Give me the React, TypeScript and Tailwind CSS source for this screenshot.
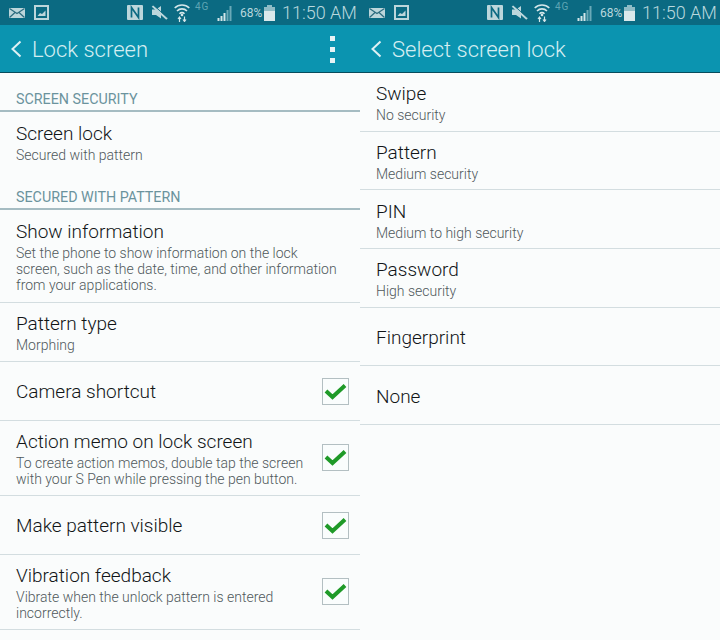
import React from "react";

const F = "font-['Roboto',sans-serif]";

function StatusBar() {
  return (
    <div className="h-[25px] bg-[#0b6a82] flex items-center text-[#b9d8de] shrink-0">
      <svg width="16" height="10" viewBox="0 0 16 10" className="ml-[9px]">
        <rect width="16" height="10" fill="#bcd6db" />
        <path d="M0.5 0.5L8 5.5L15.5 0.5M0.5 9.5L6 4.5M15.5 9.5L10 4.5" stroke="#2c6c7f" strokeWidth="1.2" fill="none" />
      </svg>
      <svg width="15" height="15" viewBox="0 0 15 15" className="ml-[9px]">
        <rect x="1" y="1" width="13" height="13" fill="#0b6a82" stroke="#bcd6db" strokeWidth="2" />
        <path d="M3.5 11L6 8L8 9L11.5 5.5V11Z" fill="#bcd6db" />
      </svg>
      <svg width="16" height="15" viewBox="0 0 16 15" className="ml-[78px]">
        <rect width="16" height="15" rx="1" fill="#bcd6db" />
        <path d="M4.5 12.5V2.5L11.5 12.5V2.5" stroke="#0b6a82" strokeWidth="1.7" fill="none" />
      </svg>
      <svg width="17" height="15" viewBox="0 0 17 15" className="ml-[8px]">
        <path d="M1 4.5H5L10 1V13.5L5 10H1Z" fill="#bcd6db" />
        <path d="M1.5 1L16 14" stroke="#bcd6db" strokeWidth="2.2" />
        <path d="M1.5 -0.8L16 12.2" stroke="#0b6a82" strokeWidth="0.9" />
      </svg>
      <svg width="16" height="19" viewBox="0 0 16 19" className="ml-[6px]">
        <path d="M0.7 5A10.5 10.5 0 0 1 15.3 5M3 8A7 7 0 0 1 13 8M5.5 10.7A3.5 3.5 0 0 1 10.5 10.7" stroke="#d4e6e9" strokeWidth="1.6" fill="none" />
        <circle cx="8" cy="12" r="1.3" fill="#d4e6e9" />
        <path d="M5.5 19V14.5M4 16L5.5 14L7 16M10.5 13.5V18M9 16.5L10.5 18.5L12 16.5" stroke="#d4e6e9" strokeWidth="1.2" fill="none" />
      </svg>
      <span className={`${F} text-[10px] leading-none ml-[5px] w-[22px] -mt-[11px] text-[#5fa5b4] tracking-[1px]`}>4G</span>
      <svg width="16" height="16" viewBox="0 0 16 16">
        <path d="M0.5 13H2.5V16H0.5ZM3.5 11H5.5V16H3.5ZM6.5 8H8.5V16H6.5Z" fill="#d4e6e9" />
        <path d="M9.5 5H11.5V16H9.5ZM12.5 1H14.5V16H12.5Z" fill="#6aa9b7" />
      </svg>
      <span className={`${F} text-[12px] leading-none ml-[7px] w-[24px] whitespace-nowrap`}>68%</span>
      <svg width="11" height="16" viewBox="0 0 11 16">
        <path d="M3 0H8V2H3Z" fill="#8fbcc6" />
        <rect y="2" width="11" height="5" fill="#8fbcc6" />
        <rect y="6" width="11" height="10" fill="#d9e8eb" />
      </svg>
      <span className={`${F} font-light text-[18px] leading-none ml-[7px] whitespace-nowrap`}>11:50 AM</span>
    </div>
  );
}

function Header({ title, menu }: { title: string; menu?: boolean }) {
  return (
    <div className="h-[48px] bg-[#0b94b0] border-b border-[#074c5c] flex items-center shrink-0">
      <svg width="12" height="18" viewBox="0 0 12 18" className="ml-[10px] mt-[1px]">
        <path d="M10.5 1.5L2.5 9L10.5 16.5" stroke="#dff1f4" strokeWidth="2" fill="none" />
      </svg>
      <span className={`${F} font-light text-[22px] leading-none text-[#d5eef2] ml-[10px] flex-1 pt-[3px]`}>{title}</span>
      {menu && (
        <div className="flex flex-col gap-[6px] mr-[25px] mt-[2px]">
          <div className="w-[5px] h-[5px] bg-[#e6f3f5]" />
          <div className="w-[5px] h-[5px] bg-[#e6f3f5]" />
          <div className="w-[5px] h-[5px] bg-[#e6f3f5]" />
        </div>
      )}
    </div>
  );
}

function Section({ label }: { label: string }) {
  return (
    <div className={`${F} h-[39px] border-b-2 border-[#a5bcc2] flex items-end px-4 pb-[2px] text-[14.3px] leading-[18px] text-[#6b939d] shrink-0`}>
      {label}
    </div>
  );
}

function Check() {
  return (
    <div className="w-[27px] h-[27px] border border-[#b3bfc2] bg-[#fafdfd] flex items-center justify-center shrink-0 ml-2 -translate-y-px">
      <svg width="23" height="17" viewBox="0 0 23 17">
        <path d="M2 8L8.5 14L21 2.5" stroke="#1f9a28" strokeWidth="4" fill="none" />
      </svg>
    </div>
  );
}

function Row({
  title,
  sub,
  h,
  check,
  line = true,
}: {
  title: string;
  sub?: string[];
  h: string;
  check?: boolean;
  line?: boolean;
}) {
  return (
    <div className={`${h} ${line ? "border-b border-[#d3dde0]" : ""} flex items-center pl-4 pr-[11px] shrink-0`}>
      <div className="flex-1 min-w-0">
        <div className={`${F} font-light text-[19px] leading-[24px] text-[#111517]`}>{title}</div>
        {sub && (
          <div className="mt-[1px]">
            {sub.map((s) => (
              <div key={s} className={`${F} font-light text-[14px] leading-[16px] text-[#4f585b] whitespace-nowrap`}>
                {s}
              </div>
            ))}
          </div>
        )}
      </div>
      {check && <Check />}
    </div>
  );
}

export default function App() {
  return (
    <div className="w-[720px] h-[640px] overflow-hidden flex bg-[#fafcfc]">
      <div className="w-[360px] flex flex-col">
        <StatusBar />
        <Header title="Lock screen" menu />
        <Section label="SCREEN SECURITY" />
        <Row title="Screen lock" sub={["Secured with pattern"]} h="h-[59px] pt-[2px]" line={false} />
        <Section label="SECURED WITH PATTERN" />
        <Row
          title="Show information"
          sub={[
            "Set the phone to show information on the lock",
            "screen, such as the date, time, and other information",
            "from your applications.",
          ]}
          h="h-[93px] pt-[1px]"
        />
        <Row title="Pattern type" sub={["Morphing"]} h="h-[59px]" />
        <Row title="Camera shortcut" h="h-[59px] pt-[2px]" check />
        <Row
          title="Action memo on lock screen"
          sub={["To create action memos, double tap the screen", "with your S Pen while pressing the pen button."]}
          h="h-[75px]"
          check
        />
        <Row title="Make pattern visible" h="h-[59px] pt-[2px]" check />
        <Row
          title="Vibration feedback"
          sub={["Vibrate when the unlock pattern is entered", "incorrectly."]}
          h="h-[75px]"
          check
        />
      </div>
      <div className="w-[360px] flex flex-col">
        <StatusBar />
        <Header title="Select screen lock" />
        <Row title="Swipe" sub={["No security"]} h="h-[58.67px] pt-[2px]" />
        <Row title="Pattern" sub={["Medium security"]} h="h-[58.67px] pt-[2px]" />
        <Row title="PIN" sub={["Medium to high security"]} h="h-[58.67px] pt-[2px]" />
        <Row title="Password" sub={["High security"]} h="h-[58.67px] pt-[2px]" />
        <Row title="Fingerprint" h="h-[58.67px] pt-[4px]" />
        <Row title="None" h="h-[58.67px] pt-[4px]" />
      </div>
    </div>
  );
}
